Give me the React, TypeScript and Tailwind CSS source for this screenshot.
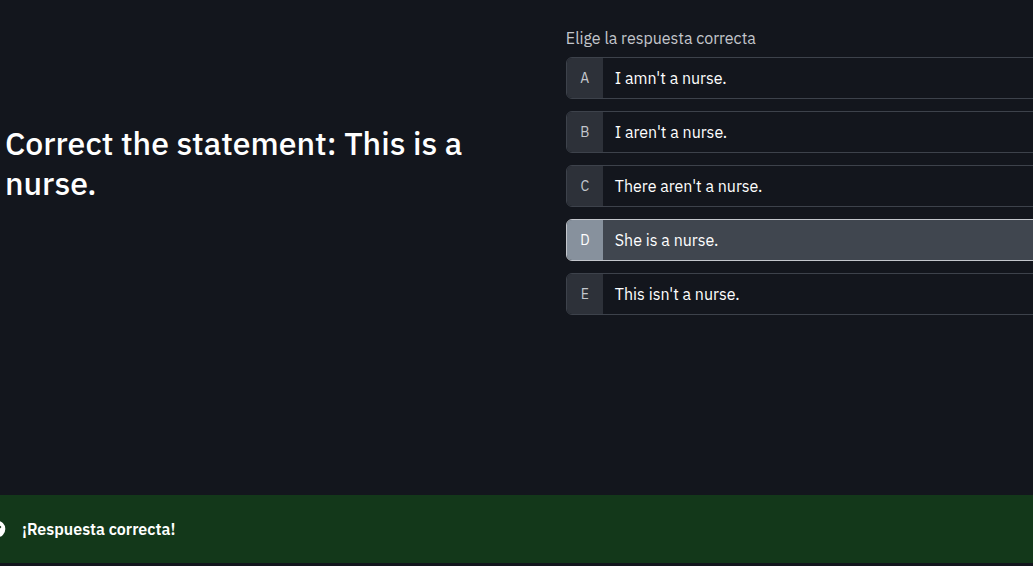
import { useState } from "react";

const options = [
  { key: "A", text: "I amn't a nurse." },
  { key: "B", text: "I aren't a nurse." },
  { key: "C", text: "There aren't a nurse." },
  { key: "D", text: "She is a nurse." },
  { key: "E", text: "This isn't a nurse." },
];

function CheckCircle() {
  return (
    <svg viewBox="0 0 24 24" className="-ml-[13px] size-5 shrink-0" aria-hidden="true">
      <circle cx="12" cy="12" r="10" fill="#fff" />
      <path d="M7 12.2l3.4 3.3 6.2-6.6" fill="none" stroke="#13381a" strokeWidth="2" />
    </svg>
  );
}

export default function App() {
  const [selected, setSelected] = useState("D");

  return (
    <div className="flex min-h-screen flex-col overflow-hidden bg-[#13161d] font-['IBM_Plex_Sans','Noto_Sans',sans-serif] text-base leading-6 text-white">
      <main className="grid grow grid-cols-[67fr_63fr] content-start gap-x-16 pt-[26px] pl-[5px]">
        <h1 className="pt-[97px] text-[32px] leading-10 font-medium">
          Correct the statement: This is a nurse.
        </h1>
        <fieldset className="min-w-0">
          <legend className="mb-[7px] text-[#c3c6cc]">Elige la respuesta correcta</legend>
          <div className="-mr-4 flex flex-col gap-3">
            {options.map(({ key, text }) => {
              const active = key === selected;
              return (
                <label
                  key={key}
                  className={`flex h-[42px] cursor-pointer items-stretch overflow-hidden rounded-md border ${
                    active ? "border-[#c3c6cc] bg-[#40464f]" : "border-[#3d424b]"
                  }`}
                >
                  <input
                    type="radio"
                    name="answer"
                    value={key}
                    checked={active}
                    onChange={() => setSelected(key)}
                    className="sr-only"
                  />
                  <span
                    className={`flex w-9 items-center justify-center text-sm ${
                      active ? "bg-[#87919d] text-white" : "bg-[#2d3139] text-[#c3c6cc]"
                    }`}
                  >
                    {key}
                  </span>
                  <span className="flex items-center px-3">{text}</span>
                </label>
              );
            })}
          </div>
        </fieldset>
      </main>
      <footer className="mb-[3px] flex h-[68px] items-center gap-[15px] bg-[#13381a]" role="status">
        <CheckCircle />
        <p className="font-semibold">¡Respuesta correcta!</p>
      </footer>
    </div>
  );
}
